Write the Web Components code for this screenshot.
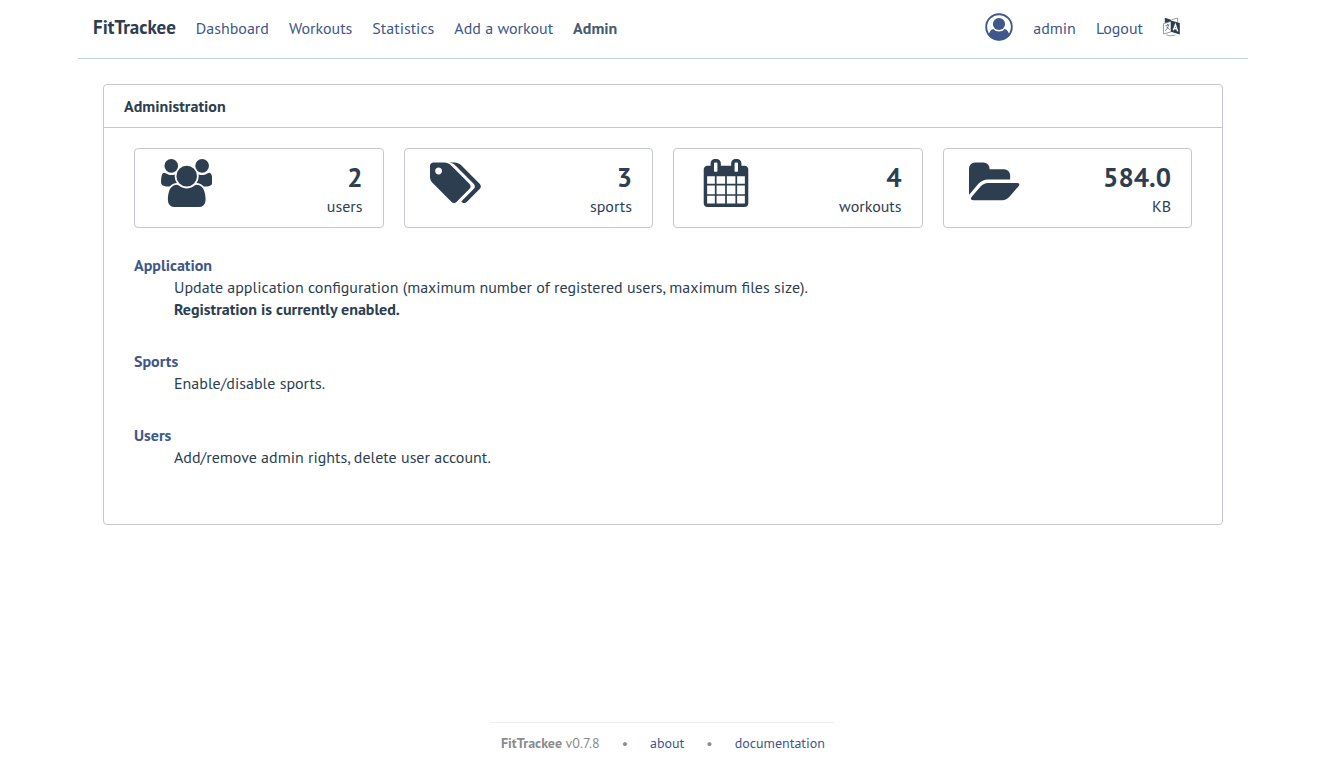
<!DOCTYPE html>
<html lang="en">
<head>
<meta charset="utf-8">
<meta name="viewport" content="width=device-width, initial-scale=1">
<title>FitTrackee - Administration</title>
<style>
:root{--text:#2c3e50;--link:#40578a;--card-border:#c4c7cf;--nav-border:#c5d2e0;--muted:#8b8b8b}
html,body{height:100%}
body{margin:0;background:#fff;color:var(--text);font:16px/22px "PT Sans","Noto Sans",sans-serif}
</style>
</head>
<body>
<ft-app></ft-app>
<script>
const define=(name,html,init)=>{
  const t=document.createElement('template');
  t.innerHTML=html;
  customElements.define(name,class extends HTMLElement{
    constructor(){super();this.attachShadow({mode:'open'}).append(t.content.cloneNode(true))}
    connectedCallback(){if(init)init(this,this.shadowRoot)}
  });
};

const icons={
  users:[1920,'M593 896q-162 5-265 128h-134q-82 0-138-40.5t-56-118.5q0-353 124-353 6 0 43.5 21t97.5 42.5 119 21.5q67 0 133-23-5 37-5 66 0 139 81 256zm1071 637q0 120-73 189.5t-194 69.5h-874q-121 0-194-69.5t-73-189.5q0-53 3.5-103.5t14-109 26.5-108.5 43-97.5 62-81 85.5-53.5 111.5-20q10 0 43 21.5t73 48 107 48 135 21.5 135-21.5 107-48 73-48 43-21.5q61 0 111.5 20t85.5 53.5 62 81 43 97.5 26.5 108.5 14 109 3.5 103.5zm-1024-1277q0 106-75 181t-181 75-181-75-75-181 75-181 181-75 181 75 75 181zm704 384q0 159-112.5 271.5t-271.5 112.5-271.5-112.5-112.5-271.5 112.5-271.5 271.5-112.5 271.5 112.5 112.5 271.5zm576 225q0 78-56 118.5t-138 40.5h-134q-103-123-265-128 81-117 81-256 0-29-5-66 66 23 133 23 59 0 119-21.5t97.5-42.5 43.5-21q124 0 124 353zm-128-609q0 106-75 181t-181 75-181-75-75-181 75-181 181-75 181 75 75 181z'],
  tags:[1920,'M448 448q0-53-37.5-90.5t-90.5-37.5-90.5 37.5-37.5 90.5 37.5 90.5 90.5 37.5 90.5-37.5 37.5-90.5zm1067 576q0 53-37 90l-491 492q-39 37-91 37-53 0-90-37l-715-716q-38-37-64.5-101t-26.5-117v-416q0-52 38-90t90-38h416q53 0 117 26.5t102 64.5l715 714q37 39 37 91zm384 0q0 53-37 90l-491 492q-39 37-91 37-36 0-59-14t-53-45l470-470q37-37 37-90 0-52-37-91l-715-714q-38-38-102-64.5t-117-26.5h224q53 0 117 26.5t102 64.5l715 714q37 39 37 91z'],
  calendar:[1792,'M192 1664h288v-288h-288v288zm352 0h320v-288h-320v288zm-352-352h288v-320h-288v320zm352 0h320v-320h-320v320zm-352-384h288v-288h-288v288zm736 736h320v-288h-320v288zm-384-736h320v-288h-320v288zm768 736h288v-288h-288v288zm-384-352h320v-320h-320v320zm-352-864v-288q0-13-9.5-22.5t-22.5-9.5h-64q-13 0-22.5 9.5t-9.5 22.5v288q0 13 9.5 22.5t22.5 9.5h64q13 0 22.5-9.5t9.5-22.5zm736 864h288v-320h-288v320zm-384-384h320v-288h-320v288zm384 0h288v-288h-288v288zm32-480v-288q0-13-9.5-22.5t-22.5-9.5h-64q-13 0-22.5 9.5t-9.5 22.5v288q0 13 9.5 22.5t22.5 9.5h64q13 0 22.5-9.5t9.5-22.5zm384-64v1280q0 52-38 90t-90 38h-1408q-52 0-90-38t-38-90v-1280q0-52 38-90t90-38h128v-96q0-66 47-113t113-47h64q66 0 113 47t47 113v96h384v-96q0-66 47-113t113-47h64q66 0 113 47t47 113v96h128q52 0 90 38t38 90z'],
  folder:[1920,'M1879 952q0 31-31 66l-336 396q-43 51-120.5 86.5t-143.5 35.5h-1088q-34 0-60.5-13t-26.5-43q0-31 31-66l336-396q43-51 120.5-86.5t143.5-35.5h1088q34 0 60.5 13t26.5 43zm-343-344v160h-832q-94 0-197 47.5t-164 119.5l-337 396-5 6q0-4-.5-12.5t-.5-12.5v-960q0-92 66-158t158-66h320q92 0 158 66t66 158v32h544q92 0 158 66t66 158z']
};

define('ft-link',`<style>
:host{display:block}
a{color:var(--link);text-decoration:none}
:host([active]) a{font-weight:700;color:#485b70}
:host([strong]) a{font-weight:700}
</style><a href="#"><slot></slot></a>`,
(el,r)=>{r.querySelector('a').href=el.getAttribute('to')||'#'});

define('ft-nav',`<style>
:host{display:flex;align-items:center;gap:20px;box-sizing:border-box;width:100%;max-width:1170px;margin:0 auto;padding:13px 68px 16px 15px;border-bottom:1px solid var(--nav-border)}
.brand{font-size:19px;font-weight:700;padding-bottom:2px}
nav,.user{display:flex;align-items:center;gap:20px}
.user{margin-left:auto}
svg{display:block}
.avatar{color:var(--link)}
.avatar,button{margin-bottom:1px}
button{display:block;padding:0;border:0;background:none;color:inherit}
</style>
<div class="brand">FitTrackee</div>
<nav>
<ft-link to="#dashboard">Dashboard</ft-link>
<ft-link to="#workouts">Workouts</ft-link>
<ft-link to="#statistics">Statistics</ft-link>
<ft-link to="#add">Add a workout</ft-link>
<ft-link to="#admin" active>Admin</ft-link>
</nav>
<div class="user">
<svg class="avatar" width="28" height="28" viewBox="0 0 28 28" fill="currentColor" aria-hidden="true">
<circle cx="14" cy="14" r="12.8" fill="none" stroke="currentColor" stroke-width="1.9"/>
<circle cx="14" cy="11" r="6.1"/>
<path d="M8.3 15.9C5.6 16.6 4.2 19 3.7 22.2A13.2 13.2 0 0 0 24.3 22.2C23.8 19 22.4 16.6 19.7 15.9A7.6 7.6 0 0 1 8.3 15.9Z"/>
</svg>
<ft-link to="#profile">admin</ft-link>
<ft-link to="#logout">Logout</ft-link>
<button type="button" aria-label="Language"><svg width="17" height="20" viewBox="0 0 17 20" fill="none" stroke="currentColor">
<path d="M8 3.6 16.8 6V17.4L8 14.8Z" fill="currentColor" stroke="none"/>
<path d="M8 4.4.5 6.6V17L8 14.8Z" stroke-width=".5"/>
<path d="M1.8.8 8 2.8V4.2L1.8 6Z" fill="currentColor" stroke="none"/>
<path d="M8.5 2.8 14.6 1V5.2M3.2 17.8Q6.5 19.9 12.4 18" stroke-width=".5"/>
<path d="M2.4 8.8 6.4 7.6M4.2 6.8l.5 1.2M5.7 8Q5 11.2 2.2 13.8M3.4 9.8 6.7 12.7" stroke-width=".6"/>
<path d="M10.3 13.2 12.4 7.6 14.7 14.4M11 11.3 14 12.2" stroke="#fff" stroke-width="1.4"/>
</svg></button>
</div>`);

define('ft-card',`<style>
:host{display:block;border:1px solid var(--card-border);border-radius:4px}
header{padding:10px 20px;border-bottom:1px solid var(--card-border)}
h1{margin:0;font-size:16px;line-height:22px}
.body{padding:20px 30px}
</style><header><h1><slot name="title"></slot></h1></header><div class="body"><slot></slot></div>`);

define('ft-stat',`<style>
:host{display:flex;justify-content:space-between;box-sizing:border-box;min-height:80px;border:1px solid var(--card-border);border-radius:4px}
.icon{display:flex;justify-content:center;width:103px;padding-top:10px}
svg{display:block;fill:currentColor;height:48px}
.info{padding:13px 20px 8px 0;text-align:right}
b{display:block;font-size:27px;line-height:30px;margin-bottom:3px}
</style><div class="icon"></div><div class="info"><b></b><slot></slot></div>`,
(el,r)=>{
  const [w,d]=icons[el.getAttribute('icon')];
  r.querySelector('.icon').innerHTML=`<svg viewBox="0 0 ${w} 1792" aria-hidden="true"><path d="${d}"/></svg>`;
  r.querySelector('b').textContent=el.getAttribute('value');
});

define('ft-section',`<style>
:host{display:block}
dl,dd{margin:0}
dd{padding-left:40px}
::slotted(strong){display:block}
</style><dl><dt><ft-link strong><slot name="name"></slot></ft-link></dt><dd><slot></slot></dd></dl>`);

define('ft-footer',`<style>
:host{display:flex;justify-content:center;font-size:14px;line-height:20px;color:var(--muted)}
.row{display:flex;gap:22px;padding:10px 10px 7px;border-top:1px solid #ebeef3}
</style><div class="row"><div><strong>FitTrackee</strong> v0.7.8</div><div>•</div><ft-link to="#about">about</ft-link><div>•</div><ft-link to="#docs">documentation</ft-link></div>`);

define('ft-app',`<style>
:host{display:flex;flex-direction:column;box-sizing:border-box;min-height:100%;padding-left:4px}
main{box-sizing:border-box;width:100%;max-width:1120px;margin:25px auto}
.stats{display:grid;grid-template-columns:repeat(4,1fr);gap:20px}
.sections{display:grid;gap:30px;padding:26px 0 36px}
ft-footer{margin-top:auto}
</style>
<ft-nav></ft-nav>
<main><ft-card><span slot="title">Administration</span>
<div class="stats">
<ft-stat icon="users" value="2">users</ft-stat>
<ft-stat icon="tags" value="3">sports</ft-stat>
<ft-stat icon="calendar" value="4">workouts</ft-stat>
<ft-stat icon="folder" value="584.0">KB</ft-stat>
</div>
<div class="sections">
<ft-section><span slot="name">Application</span>Update application configuration (maximum number of registered users, maximum files size).<strong>Registration is currently enabled.</strong></ft-section>
<ft-section><span slot="name">Sports</span>Enable/disable sports.</ft-section>
<ft-section><span slot="name">Users</span>Add/remove admin rights, delete user account.</ft-section>
</div>
</ft-card></main>
<ft-footer></ft-footer>`);
</script>
</body>
</html>
